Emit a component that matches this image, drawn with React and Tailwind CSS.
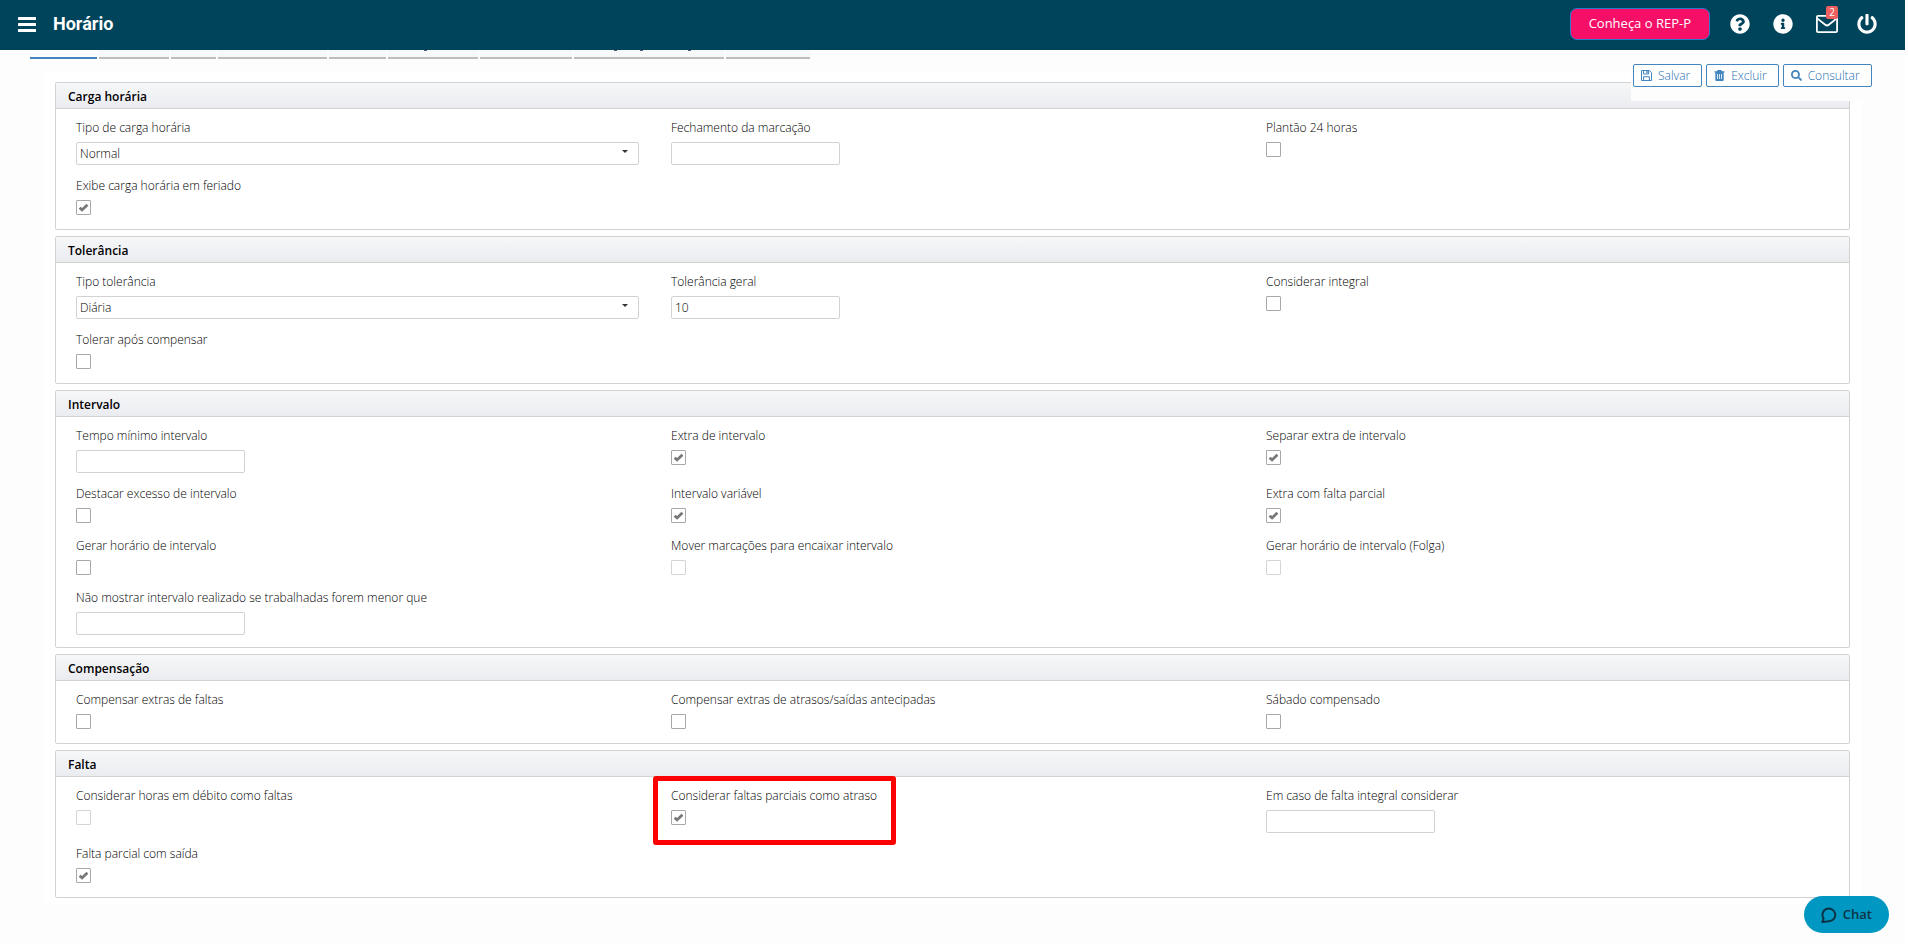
import { FaInfoCircle, FaPowerOff, FaQuestionCircle, FaSearch } from "react-icons/fa";

// marks are the descenders that peek out below the top bar
const TABS = [
  { id: "Aba 1", width: "w-[67px]", active: true, marks: [] },
  { id: "Aba 2", width: "w-[70px]", marks: [] },
  { id: "Aba 3", width: "w-[45px]", marks: [] },
  { id: "Aba 4", width: "w-[109px]", marks: [] },
  { id: "Aba 5", width: "w-[57px]", marks: [] },
  { id: "Aba 6", width: "w-[90px]", marks: ["ml-[36px]"] },
  { id: "Aba 7", width: "w-[92px]", marks: [] },
  { id: "Aba 8", width: "w-[150px]", marks: ["ml-[40px]", "ml-[23px]", "ml-[45px]"] },
  { id: "Aba 9", width: "w-[84px]", marks: [] },
];

const SECTIONS = [
  {
    title: "Carga horária",
    fields: [
      { label: "Tipo de carga horária", type: "select", value: "Normal" },
      { label: "Fechamento da marcação", type: "text" },
      { label: "Plantão 24 horas", type: "check" },
      { label: "Exibe carga horária em feriado", type: "check", checked: true },
    ],
  },
  {
    title: "Tolerância",
    fields: [
      { label: "Tipo tolerância", type: "select", value: "Diária" },
      { label: "Tolerância geral", type: "text", value: "10" },
      { label: "Considerar integral", type: "check" },
      { label: "Tolerar após compensar", type: "check" },
    ],
  },
  {
    title: "Intervalo",
    fields: [
      { label: "Tempo mínimo intervalo", type: "text" },
      { label: "Extra de intervalo", type: "check", checked: true },
      { label: "Separar extra de intervalo", type: "check", checked: true },
      { label: "Destacar excesso de intervalo", type: "check" },
      { label: "Intervalo variável", type: "check", checked: true },
      { label: "Extra com falta parcial", type: "check", checked: true },
      { label: "Gerar horário de intervalo", type: "check" },
      { label: "Mover marcações para encaixar intervalo", type: "check", disabled: true },
      { label: "Gerar horário de intervalo (Folga)", type: "check", disabled: true },
      { label: "Não mostrar intervalo realizado se trabalhadas forem menor que", type: "text" },
    ],
  },
  {
    title: "Compensação",
    fields: [
      { label: "Compensar extras de faltas", type: "check" },
      { label: "Compensar extras de atrasos/saídas antecipadas", type: "check" },
      { label: "Sábado compensado", type: "check" },
    ],
  },
  {
    title: "Falta",
    fields: [
      { label: "Considerar horas em débito como faltas", type: "check", disabled: true },
      { label: "Considerar faltas parciais como atraso", type: "check", checked: true, highlight: true },
      { label: "Em caso de falta integral considerar", type: "text" },
      { label: "Falta parcial com saída", type: "check", checked: true },
    ],
  },
];

function MenuIcon() {
  return (
    <svg viewBox="0 0 18 15" className="h-[15px] w-[18px]" fill="currentColor" aria-hidden>
      <rect width="18" height="3" rx="0.5" />
      <rect y="6" width="18" height="3" rx="0.5" />
      <rect y="12" width="18" height="3" rx="0.5" />
    </svg>
  );
}

function EnvelopeIcon() {
  return (
    <svg
      viewBox="0 0 22 18"
      className="h-[18px] w-[22px]"
      fill="none"
      stroke="currentColor"
      strokeWidth="1.8"
      strokeLinejoin="round"
      aria-hidden
    >
      <rect x="0.9" y="0.9" width="20.2" height="16.2" rx="1.2" />
      <path d="M1.2 3.4 L9.2 9.8 Q11 11.2 12.8 9.8 L20.8 3.4" />
    </svg>
  );
}

function SaveIcon({ className }) {
  return (
    <svg viewBox="0 0 11 11" className={className} fill="none" stroke="currentColor" aria-hidden>
      <path d="M0.5 0.5 H8.3 L10.5 2.7 V10.5 H0.5 Z" />
      <path d="M2.6 0.5 V4 H7.6 V0.5 M2.6 10.5 V6.7 H8.4 V10.5" />
      <path d="M6 1 V3.2" strokeWidth="1.4" />
    </svg>
  );
}

function TrashIcon({ className }) {
  return (
    <svg viewBox="0 0 11 11" className={className} aria-hidden>
      <path
        fill="currentColor"
        fillRule="evenodd"
        d="M3.6 0h3.8l.6 1.3h2.5v1.2h-.8V10q0 1-1 1H2.3q-1 0-1-1V2.5H.5V1.3H3zM3.1 4v5h.8V4zM5.1 4v5h.8V4zM7.1 4v5h.8V4z"
      />
    </svg>
  );
}

function Checkbox({ id, checked, disabled }) {
  return (
    <span className="mb-[13px] grid size-[15px]">
      <input
        id={id}
        type="checkbox"
        defaultChecked={checked}
        disabled={disabled}
        className="peer col-start-1 row-start-1 size-[15px] appearance-none rounded-[1px] border border-[#a8a8a8] bg-white disabled:border-[#d5d5d5]"
      />
      <svg
        viewBox="0 0 15 15"
        className="pointer-events-none col-start-1 row-start-1 hidden size-[15px] peer-checked:block"
        aria-hidden
      >
        <path d="M3.6 7.7 L6.1 9.9 L11.4 4.8" fill="none" stroke="#777" strokeWidth="2.8" />
      </svg>
    </span>
  );
}

function Field({ id, field }) {
  return (
    <div className="relative px-4">
      {field.highlight ? (
        <div className="pointer-events-none absolute -top-[10px] left-[-2px] h-[69px] w-[243px] rounded-[3px] border-[5px] border-[#fe0000]" />
      ) : null}
      <label htmlFor={id} className="mb-1 block h-5 w-fit leading-5 whitespace-nowrap">
        {field.label}
      </label>
      {field.type === "select" ? (
        <div className="mb-[11px] grid">
          <select
            id={id}
            className="col-start-1 row-start-1 h-[23px] w-full appearance-none rounded-[2px] border border-[#d2d2d2] bg-white px-[3px] leading-5"
          >
            <option>{field.value}</option>
          </select>
          <svg
            viewBox="0 0 6 3"
            className="pointer-events-none col-start-1 row-start-1 mt-2 mr-[11px] h-[3px] w-[6px] justify-self-end"
            aria-hidden
          >
            <path d="M0 0h6L3 3z" fill="#333" />
          </svg>
        </div>
      ) : null}
      {field.type === "text" ? (
        <input
          id={id}
          type="text"
          defaultValue={field.value}
          className="mb-[11px] block h-[23px] w-[169px] rounded-[2px] border border-[#d2d2d2] bg-white px-[3px]"
        />
      ) : null}
      {field.type === "check" ? <Checkbox id={id} checked={field.checked} disabled={field.disabled} /> : null}
    </div>
  );
}

function Section({ section, index }) {
  return (
    <section className="rounded-[2px] border border-[#d2d2d2] bg-white">
      <h2 className="h-[26px] border-b border-[#d2d2d2] bg-linear-to-b from-[#f6f7f8] to-[#ebecf0] px-3 text-[12px] leading-7 font-semibold">
        {section.title}
      </h2>
      <div className="grid grid-cols-3 px-1 pt-[9px] pb-px">
        {section.fields.map((field, i) => (
          <Field key={field.label} id={`field-${index}-${i}`} field={field} />
        ))}
      </div>
    </section>
  );
}

function ToolbarButton({ icon: Icon, children }) {
  return (
    <button
      type="button"
      className="flex h-[23px] items-center gap-[6px] rounded-[2px] border border-[#4386bf] bg-white pr-[11px] pl-[7px] text-[#2470b3]"
    >
      <Icon className="size-[11px] text-[#4386bf]" aria-hidden />
      {children}
    </button>
  );
}

function TopBar() {
  return (
    <header className="flex h-[50px] items-center justify-between bg-[#00445b] pr-7 pb-[2px] pl-[18px] text-white">
      <div className="flex items-center gap-[17px]">
        <button type="button" aria-label="Menu">
          <MenuIcon />
        </button>
        <h1 className="font-[Roboto,sans-serif] text-[18px] leading-6 font-bold">Horário</h1>
      </div>
      <div className="flex items-center">
        <button
          type="button"
          className="mr-5 h-8 rounded-[7px] border border-[#2a7ccb] bg-[#f60f67] px-[18px] text-[13px] font-normal"
        >
          Conheça o REP-P
        </button>
        <button type="button" aria-label="Ajuda" className="mr-[23px]">
          <FaQuestionCircle className="size-5" />
        </button>
        <button type="button" aria-label="Informações" className="mr-[23px]">
          <FaInfoCircle className="size-5" />
        </button>
        <button type="button" aria-label="Mensagens" className="relative mr-[19px]">
          <EnvelopeIcon />
          <span className="absolute -top-[9px] right-0 h-[13px] w-3 rounded-[2px] bg-[#ee5f5f] text-center text-[10px] leading-[13px] font-normal">
            2
          </span>
        </button>
        <button type="button" aria-label="Sair">
          <FaPowerOff className="size-5" />
        </button>
      </div>
    </header>
  );
}

export default function App() {
  return (
    <div className="min-h-screen bg-white pr-[3px] font-['Open_Sans',sans-serif] text-[12px] font-light text-black">
      <div className="relative min-h-screen bg-[#fdfdfd]">
        <TopBar />
        <nav className="flex h-[9px] gap-[2px] pl-[30px]" aria-label="Abas">
          {TABS.map((tab) => (
            <button
              key={tab.id}
              type="button"
              aria-label={tab.id}
              className={`flex h-[9px] items-start border-b-2 ${tab.width} ${tab.active ? "border-[#4386bf]" : "border-[#bbbdbe] bg-[#f6f8f9]"}`}
            >
              {tab.marks.map((mark) => (
                <span key={mark} className={`h-px w-[3px] bg-[#4a5a78] ${mark}`} />
              ))}
            </button>
          ))}
        </nav>
        <div className="absolute top-[50px] right-0 flex h-[51px] w-[274px] items-start gap-1 bg-[#fdfdfd] pt-[14px] pl-[2px]">
          <ToolbarButton icon={SaveIcon}>Salvar</ToolbarButton>
          <ToolbarButton icon={TrashIcon}>Excluir</ToolbarButton>
          <ToolbarButton icon={FaSearch}>Consultar</ToolbarButton>
        </div>
        <main className="mx-[44px] mt-3 flex flex-col gap-[6px] bg-white px-[11px] pt-[11px] pb-[6px]">
          {SECTIONS.map((section, index) => (
            <Section key={section.title} section={section} index={index} />
          ))}
        </main>
        <button
          type="button"
          className="fixed right-[19px] bottom-[11px] flex h-[37px] items-center gap-[6px] rounded-full bg-[#0098c2] px-[17px] text-[13px] font-semibold text-[#0b3344]"
        >
          <svg
            viewBox="0 0 16 16"
            className="size-4"
            fill="none"
            stroke="currentColor"
            strokeWidth="2"
            strokeLinejoin="round"
            aria-hidden
          >
            <path d="M1.2 15 L2.6 11.5 A6.4 6.4 0 1 1 8.3 14.2 Z" />
          </svg>
          Chat
        </button>
      </div>
    </div>
  );
}
